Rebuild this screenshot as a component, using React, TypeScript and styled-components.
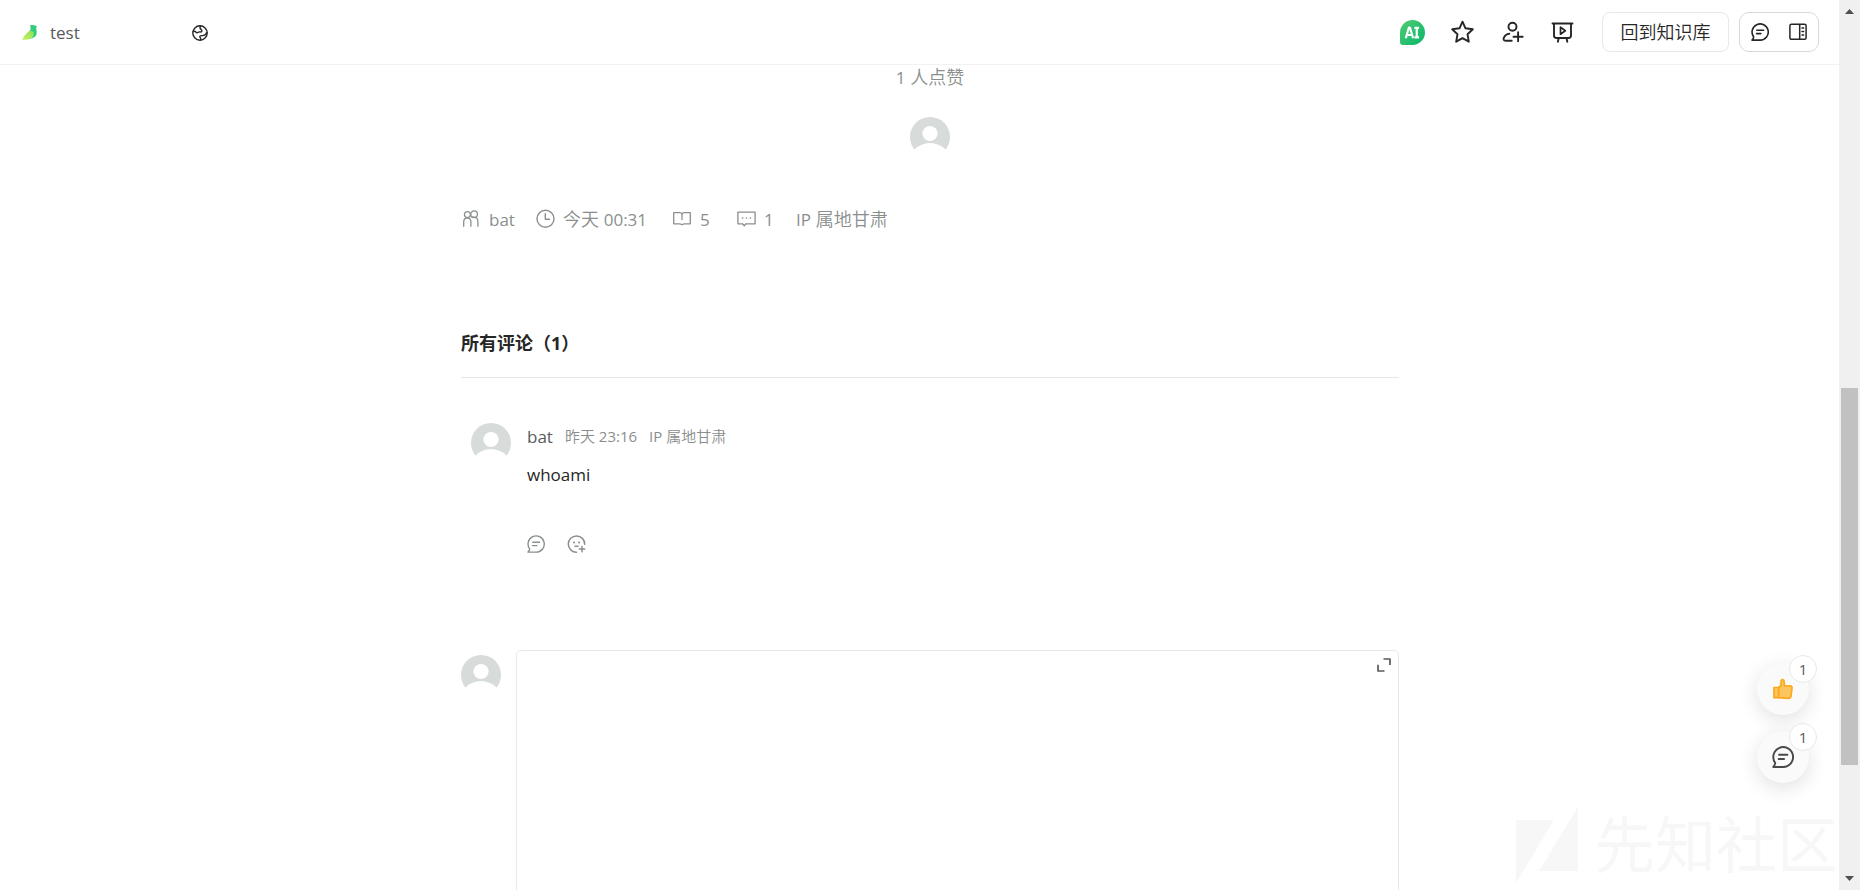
import React from 'react';
import styled, { createGlobalStyle } from 'styled-components';

const Global = createGlobalStyle`
  *, *::before, *::after { box-sizing: border-box; }
  html, body { margin: 0; padding: 0; background: #fff; }
  body {
    font-family: "Open Sans", "Noto Sans CJK SC", sans-serif;
    font-size: 17px;
    line-height: 24px;
    font-weight: 350;
    color: #262626;
  }
  button, textarea { font: inherit; color: inherit; }
  svg { display: block; flex: none; }
`;

const Page = styled.div`
  position: relative;
  height: 100vh;
  overflow: hidden;
  background: #fff;
`;

const Header = styled.header`
  display: flex;
  align-items: center;
  justify-content: space-between;
  height: 65px;
  padding: 0 41px 0 20px;
  border-bottom: 1px solid #f1f1f1;
`;

const Title = styled.div`
  display: flex;
  align-items: center;
  gap: 12px;
  padding-top: 2px;
`;

const DocLink = styled.a`
  width: 130px;
  font-weight: 400;
  color: #585a5a;
  text-decoration: none;
`;

const Actions = styled.nav`
  display: flex;
  align-items: center;
  gap: 24px;
`;

const IconButton = styled.button`
  display: flex;
  align-items: center;
  justify-content: center;
  padding: 0;
  border: 0;
  background: none;
  color: inherit;
  cursor: pointer;
`;

const ButtonRow = styled.div`
  display: flex;
  gap: 10px;
  margin-left: 2px;
`;

const BackButton = styled.button`
  width: 127px;
  height: 40px;
  padding: 0;
  border: 1px solid #e7e9e8;
  border-radius: 8px;
  background: #fff;
  font-size: 18px;
  white-space: nowrap;
  cursor: pointer;
`;

const ViewGroup = styled.div`
  display: flex;
  align-items: center;
  justify-content: space-between;
  width: 80px;
  height: 40px;
  padding: 0 11px;
  border: 1px solid #d8dad9;
  border-radius: 10px;
`;

const Content = styled.main`
  display: flex;
  flex-direction: column;
  max-width: 938px;
  margin: 0 auto;
`;

const Latin = styled.span<{ $size?: number }>`
  font-size: ${(p) => p.$size ?? 17}px;
  line-height: 1;
  font-weight: 400;
`;

const Likes = styled.section`
  display: flex;
  flex-direction: column;
  align-items: center;
  gap: 28px;
  font-size: 18px;
  color: #8a8f8d;
`;

const Meta = styled.ul`
  display: flex;
  margin: 50px 0 0;
  padding: 0;
  list-style: none;
  font-size: 18px;
  color: #8a8f8d;
`;

const MetaItem = styled.li<{ $width: number }>`
  display: flex;
  align-items: center;
  gap: 8px;
  width: ${(p) => p.$width}px;
  height: 24px;
  white-space: nowrap;
`;

const Heading = styled.h2`
  margin: 100px 0 0;
  padding-bottom: 22px;
  border-bottom: 1px solid #e7e9e8;
  font-size: 18px;
  line-height: 24px;
  font-weight: 700;
`;

const Comment = styled.article`
  display: flex;
  gap: 16px;
  margin: 45px 0 0 10px;
`;

const CommentBody = styled.div`
  display: flex;
  flex-direction: column;
`;

const Byline = styled.div`
  display: flex;
  align-items: center;
  gap: 12px;
  height: 28px;
`;

const Author = styled.a`
  font-weight: 400;
  color: #585a5a;
  text-decoration: none;
`;

const Small = styled.span`
  padding-bottom: 2px;
  font-size: 15px;
  color: #8a8f8d;
`;

const CommentText = styled.p`
  margin: 12px 0 47px;
  font-weight: 400;
`;

const CommentActions = styled.div`
  display: flex;
  gap: 22px;
  color: #8a8f8d;
`;

const Composer = styled.form`
  display: flex;
  align-items: flex-start;
  gap: 15px;
  margin-top: 96px;
`;

const ComposerAvatar = styled.div`
  padding-top: 5px;
`;

const Editor = styled.div`
  display: flex;
  flex: 1;
  align-items: flex-start;
  min-height: 320px;
  padding: 7px;
  border: 1px solid #e7e9e8;
  border-radius: 5px;
`;

const EditorInput = styled.textarea`
  flex: 1;
  height: 280px;
  padding: 8px;
  border: 0;
  outline: 0;
  resize: none;
  background: transparent;
`;

const Floating = styled.div`
  position: absolute;
  right: 51px;
  bottom: 107px;
  display: flex;
  flex-direction: column;
  gap: 16px;
`;

const RoundButton = styled.button`
  position: relative;
  display: flex;
  align-items: center;
  justify-content: center;
  width: 52px;
  height: 52px;
  padding: 0;
  border: 0;
  border-radius: 50%;
  background: #fafafa;
  box-shadow: 0 5px 20px rgba(0, 0, 0, 0.12);
  color: #484a4a;
  cursor: pointer;
`;

const Badge = styled.span`
  position: absolute;
  top: -8px;
  right: -8px;
  width: 28px;
  height: 28px;
  border: 1px solid #e7e9e8;
  border-radius: 50%;
  background: #fff;
  font-size: 15px;
  line-height: 26px;
  font-weight: 400;
  text-align: center;
  color: #585a5a;
`;

const Watermark = styled.div`
  position: absolute;
  right: 22px;
  bottom: 1px;
  display: flex;
  align-items: center;
  gap: 16px;
  color: #f7f7f7;
  font-size: 61px;
  line-height: 88px;
  font-weight: 400;
  white-space: nowrap;
`;

const ScrollTrack = styled.div`
  position: absolute;
  top: 0;
  right: 0;
  bottom: 0;
  display: flex;
  flex-direction: column;
  align-items: center;
  justify-content: space-between;
  width: 21px;
  padding: 9px 0;
  background: #f0f0f0;
`;

const ScrollThumb = styled.div`
  position: absolute;
  top: 43.6%;
  left: 2px;
  width: 17px;
  height: 42.4%;
  background: #c1c1c1;
`;

const Avatar = () => (
  <svg width="40" height="40" viewBox="0 0 40 40" role="img" aria-label="avatar">
    <circle cx="20" cy="20" r="20" fill="#d7dbda" />
    <circle cx="20" cy="16.5" r="7.6" fill="#fff" />
    <path d="M0 40V35L4.5 32.500Q11 26 20 26Q29 26 35.500 32.500L40 35V40Z" fill="#fff" />
  </svg>
);

const line = {
  fill: 'none',
  stroke: 'currentColor',
  strokeLinecap: 'round' as const,
  strokeLinejoin: 'round' as const,
};

const ChatIcon = ({ size = 18, weight = 1.6 }: { size?: number; weight?: number }) => (
  <svg width={size} height={size} viewBox="0 0 18 18" {...line} strokeWidth={weight}>
    <path d="M1 17.100H9.300A8.100 8.100 0 1 0 2.700 13.900Q2.500 15.800 1 17.100Z" />
    <path d="M5.800 7.200H12.600M5.500 10.600H9.900" />
  </svg>
);

const BirdLogo = () => (
  <svg width="18" height="18" viewBox="0 0 18 18">
    <defs>
      <linearGradient id="wing" x1="0" y1="1" x2="1" y2="0">
        <stop offset="0" stopColor="#c9f15d" />
        <stop offset="1" stopColor="#8be05a" />
      </linearGradient>
    </defs>
    <path d="M10 1.300Q13.500 .5 15.500 1.800L17 2Q15.700 3.400 16.400 6Q17.700 10.500 14.500 13Q12.500 14.600 9 14.800L6.500 11L10.600 5.500Q10.800 3.300 10 1.300Z" fill="#33cc7a" />
    <path d="M2.100 15.800Q4.500 10.500 9.500 6.800Q13.500 6.600 13.800 9.500Q13.500 14.600 7.500 15.600Q4.500 16 2.100 15.800Z" fill="url(#wing)" />
  </svg>
);

const GlobeIcon = () => (
  <svg width="16" height="16" viewBox="0 0 16 16" {...line} strokeWidth="1.400">
    <circle cx="8" cy="8" r="7.200" />
    <path d="M1.200 6.600Q3 5.600 4 7.200Q5 8.300 6.200 7.200Q7 6.600 8.200 7Q10.600 7 9.600 4.800Q7.500 4.200 8.200 1.200M14.800 7.500Q13.500 10.500 10.500 10.600Q7.800 10.400 7.700 12Q9.200 12.800 8.600 14.900" />
  </svg>
);

const AiIcon = () => (
  <svg width="26" height="26" viewBox="0 0 26 26">
    <defs>
      <linearGradient id="ai" x1="0" y1="0" x2="1" y2="1">
        <stop offset="0" stopColor="#52cc72" />
        <stop offset="1" stopColor="#07b66b" />
      </linearGradient>
    </defs>
    <path d="M12.500 1A12.500 12.500 0 1 1 12.500 26H3A3 3 0 0 1 0 23V13.500A12.500 12.500 0 0 1 12.500 1Z" fill="url(#ai)" />
    <g fill="none" stroke="#fff" strokeWidth="2.200" strokeLinejoin="round">
      <path d="M5.800 19.300L8.900 8.500H9.900L13.100 19.300M7 16H11.800M14.400 8.800H19.100M16.750 8.800V18.500M14.400 18.400H19.100" />
    </g>
  </svg>
);

const StarIcon = () => (
  <svg width="26" height="26" viewBox="0 0 26 26" {...line} strokeWidth="1.900">
    <path d="M12.500 2.700L15.500 9.300L22.800 10.300L17.500 15.200L18.800 22.700L12.500 19.200L6.200 22.700L7.500 15.200L2.200 10.300L9.500 9.300Z" />
  </svg>
);

const InviteIcon = () => (
  <svg width="26" height="26" viewBox="-1 -1 26 26" {...line} strokeWidth="1.900">
    <circle cx="11.500" cy="6.700" r="4" />
    <path d="M10.700 20.700H4.600Q2 20.700 2.700 18.100Q4.300 14.200 8.300 13.800M12.500 16.700H21.700M17.100 12.200V21.300" />
  </svg>
);

const PresentIcon = () => (
  <svg width="26" height="26" viewBox="-1 -1 26 26" {...line} strokeWidth="1.900">
    <path d="M1.500 3.500H21.500M3 3.500V15.500Q3 18 5.500 18H17.500Q20 18 20 15.500V3.500M7.700 18L6.900 21.800M15.500 18L16.300 21.800" />
    <path d="M9.500 7.200L14.300 10.700L9.500 14.200Z" strokeWidth="1.700" />
  </svg>
);

const SidebarIcon = () => (
  <svg width="18" height="18" viewBox="0 0 18 18" {...line} strokeWidth="1.500">
    <rect x=".9" y="1.300" width="16.200" height="15" rx="1.500" />
    <path d="M10.700 1.500V16M13 5H14.600M13 8.500H14.600M13 12H14.600" />
  </svg>
);

const PeopleIcon = () => (
  <svg width="20" height="20" viewBox="0 0 20 20" {...line} strokeWidth="1.300">
    <circle cx="6.400" cy="5.600" r="3" />
    <path d="M2.700 17.300V13Q2.700 8.900 6.300 8.800Q9.900 8.900 9.900 13V17.300" />
    <circle cx="13.100" cy="5.200" r="3.300" />
    <path d="M11.200 8.200Q16.900 7.600 16.900 13V17.300" />
  </svg>
);

const ClockIcon = () => (
  <svg width="20" height="20" viewBox="0 0 20 20" {...line} strokeWidth="1.400">
    <circle cx="10.500" cy="9.700" r="8.500" />
    <path d="M10.300 4.800V10.200H14.500" />
  </svg>
);

const BookIcon = () => (
  <svg width="20" height="20" viewBox="0 0 20 20" {...line} strokeWidth="1.300">
    <path d="M10 15.700Q8.800 14.800 7.500 14.800H1.700V3.700H7.800Q9.500 3.700 10 5.200Q10.500 3.700 12.200 3.700H18.300V14.800H12.500Q11.200 14.800 10 15.700ZM10 5.200V10.500" />
  </svg>
);

const MessageIcon = () => (
  <svg width="20" height="20" viewBox="0 0 20 20" {...line} strokeWidth="1.300">
    <path d="M1.900 3.200H19.100V14.800H10L8.300 16.700L6.500 14.800H1.900Z" />
    <path d="M6.500 9H6.700M10.400 9H10.600M14.300 9H14.500" strokeWidth="1.600" />
  </svg>
);

const EmojiIcon = () => (
  <svg width="20" height="20" viewBox="0 0 20 20" {...line} strokeWidth="1.500">
    <path d="M9.500 18.300A8.200 8.200 0 1 1 17.700 10.200M8 12.300H11M15 12.400V17.800M12.300 15.100H17.700" />
    <path d="M7 8.500H7.100M12 8.500H12.100" strokeWidth="1.900" />
  </svg>
);

const ExpandIcon = () => (
  <svg width="14" height="14" viewBox="0 0 14 14" fill="none" stroke="#585a5a" strokeWidth="1.700" strokeLinejoin="round">
    <path d="M6.500 1H13V7M1 6.800V13H7.500" />
  </svg>
);

const ThumbIcon = () => (
  <svg width="20" height="22" viewBox="0 0 20 22" stroke="#fba81c" strokeWidth="1.700" strokeLinejoin="round">
    <path d="M5.500 9.500L8 7.500V3Q9 .4 10.800 2.300Q11.500 5 11.300 8L17.500 7.900Q19.500 8.300 18.900 10.800L18 18.200Q17.600 20.400 15.500 20.300L5.500 19.700Z" fill="#fdc55f" />
    <path d="M1 9.500H5.500V19.700H1Z" fill="#fdc55f" />
  </svg>
);

export default function App() {
  return (
    <Page>
      <Global />
      <Header>
        <Title>
          <BirdLogo />
          <DocLink href="#doc">test</DocLink>
          <GlobeIcon />
        </Title>
        <Actions>
          <IconButton aria-label="AI"><AiIcon /></IconButton>
          <IconButton aria-label="收藏"><StarIcon /></IconButton>
          <IconButton aria-label="邀请"><InviteIcon /></IconButton>
          <IconButton aria-label="演示"><PresentIcon /></IconButton>
          <ButtonRow>
            <BackButton>回到知识库</BackButton>
            <ViewGroup>
              <IconButton aria-label="评论"><ChatIcon /></IconButton>
              <IconButton aria-label="侧栏"><SidebarIcon /></IconButton>
            </ViewGroup>
          </ButtonRow>
        </Actions>
      </Header>
      <Content>
        <Likes>
          <span><Latin>1</Latin> 人点赞</span>
          <Avatar />
        </Likes>
        <Meta>
          <MetaItem $width={74}><PeopleIcon /><Latin>bat</Latin></MetaItem>
          <MetaItem $width={137}><ClockIcon /><span>今天 <Latin>00:31</Latin></span></MetaItem>
          <MetaItem $width={64}><BookIcon /><Latin>5</Latin></MetaItem>
          <MetaItem $width={60}><MessageIcon /><Latin>1</Latin></MetaItem>
          <MetaItem $width={100}><span><Latin>IP</Latin> 属地甘肃</span></MetaItem>
        </Meta>
        <Heading>所有评论（1）</Heading>
        <Comment>
          <Avatar />
          <CommentBody>
            <Byline>
              <Author href="#bat">bat</Author>
              <Small>昨天 <Latin $size={15}>23:16</Latin></Small>
              <Small><Latin $size={15}>IP</Latin> 属地甘肃</Small>
            </Byline>
            <CommentText>whoami</CommentText>
            <CommentActions>
              <IconButton aria-label="回复"><ChatIcon weight={1.4} /></IconButton>
              <IconButton aria-label="表情"><EmojiIcon /></IconButton>
            </CommentActions>
          </CommentBody>
        </Comment>
        <Composer>
          <ComposerAvatar><Avatar /></ComposerAvatar>
          <Editor>
            <EditorInput aria-label="评论内容" />
            <IconButton type="button" aria-label="展开"><ExpandIcon /></IconButton>
          </Editor>
        </Composer>
      </Content>
      <Watermark>
        <svg width="62" height="76" viewBox="0 0 62 76" fill="currentColor">
          <path d="M0 13H38L0 76ZM62 0V64H23Z" />
        </svg>
        先知社区
      </Watermark>
      <Floating>
        <RoundButton aria-label="点赞"><ThumbIcon /><Badge>1</Badge></RoundButton>
        <RoundButton aria-label="查看评论"><ChatIcon size={22} /><Badge>1</Badge></RoundButton>
      </Floating>
      <ScrollTrack>
        <svg width="9" height="5" viewBox="0 0 9 5" fill="#505050"><path d="M0 5L4.500 0L9 5Z" /></svg>
        <ScrollThumb />
        <svg width="9" height="5" viewBox="0 0 9 5" fill="#505050"><path d="M0 0L4.500 5L9 0Z" /></svg>
      </ScrollTrack>
    </Page>
  );
}
